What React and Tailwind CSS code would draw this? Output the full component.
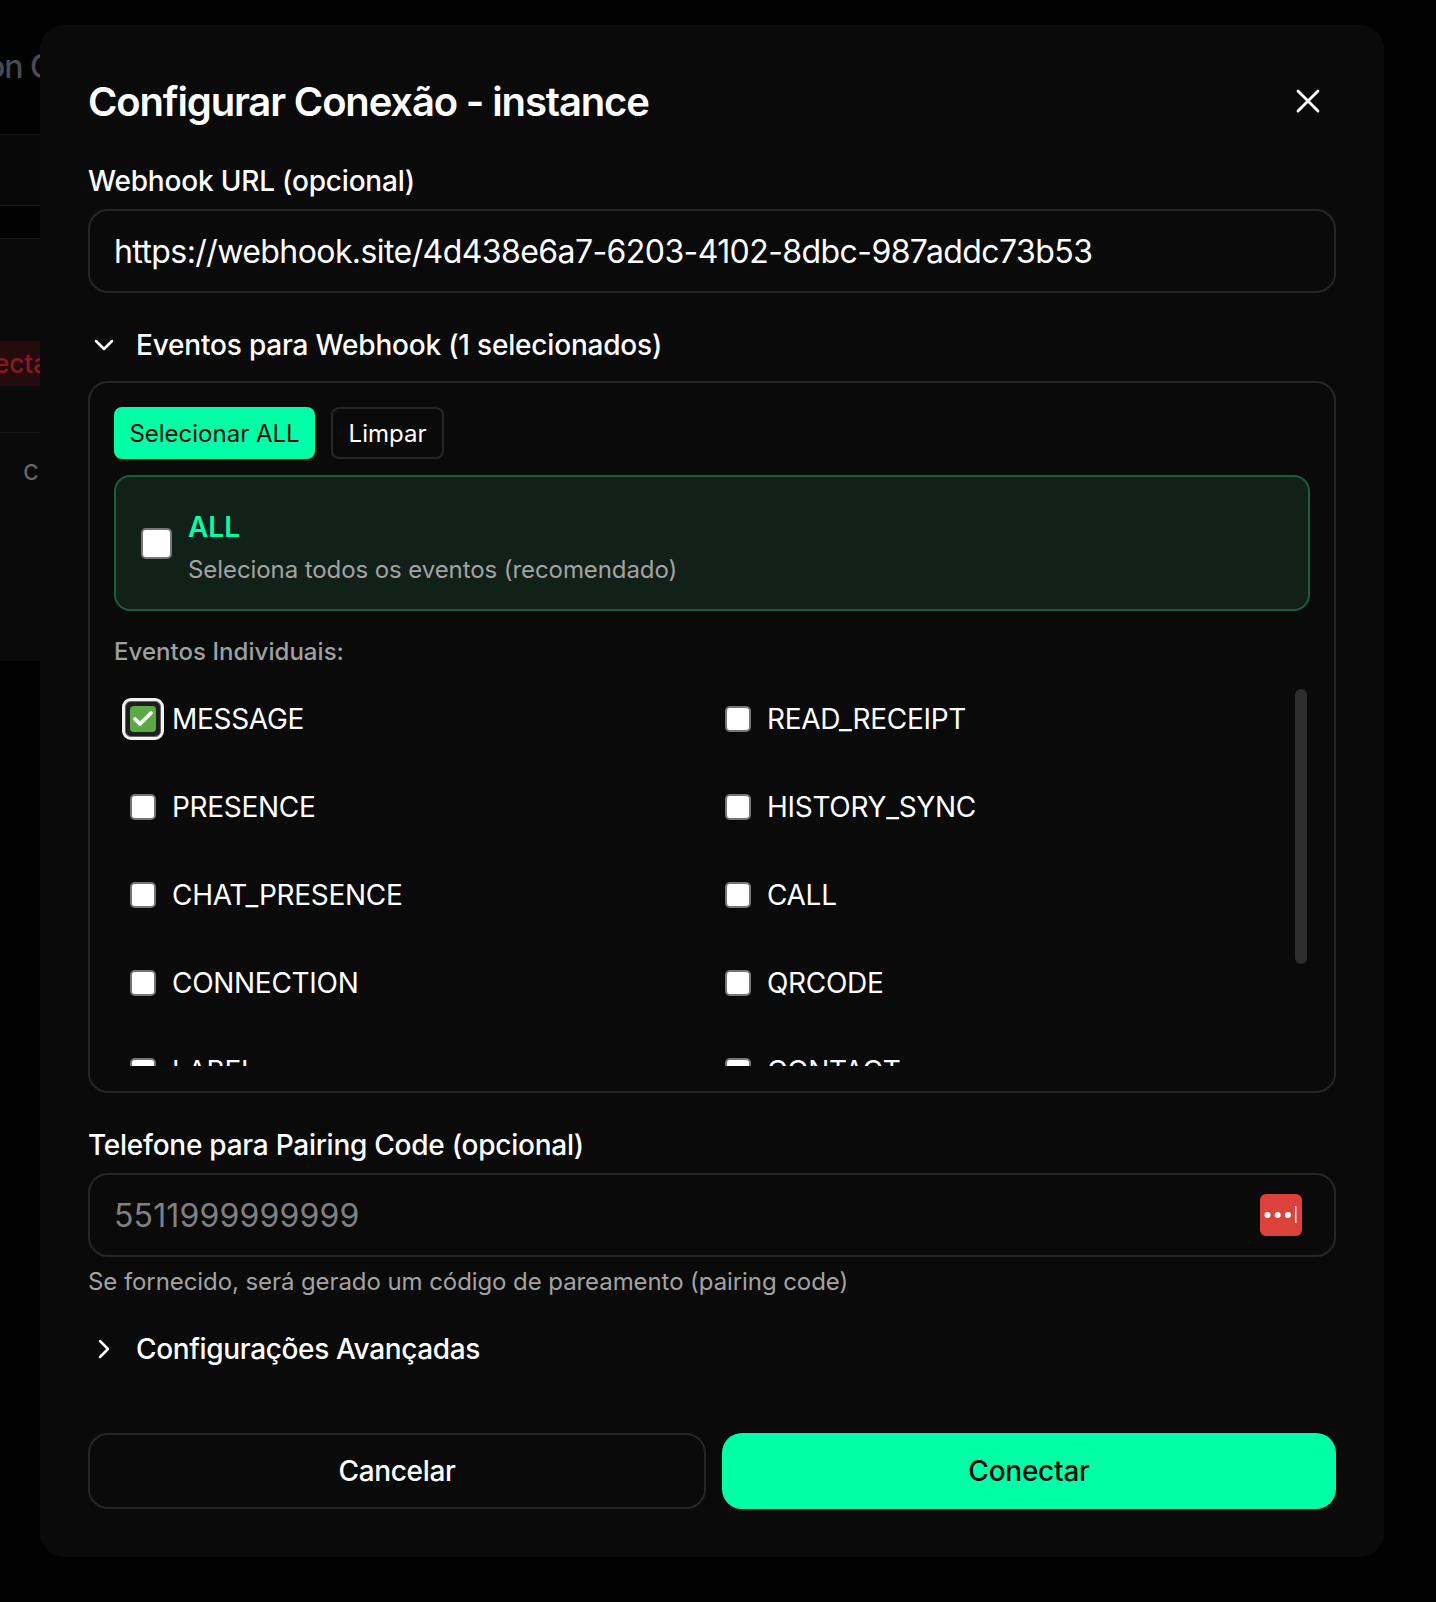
import React from "react";
import { X, ChevronDown, ChevronRight, Check } from "lucide-react";

const events = [
  ["MESSAGE", "READ_RECEIPT"],
  ["PRESENCE", "HISTORY_SYNC"],
  ["CHAT_PRESENCE", "CALL"],
  ["CONNECTION", "QRCODE"],
  ["LABEL", "CONTACT"],
];

function Box({ checked }) {
  if (checked) {
    return (
      <span className="relative flex h-[26px] w-[26px] shrink-0 items-center justify-center">
        <span className="absolute -inset-2 rounded-[9px] border-[3px] border-[#f2f2f2] bg-[#1e1e1e] shadow-[inset_0_0_0_1px_#666666]" />
        <span className="relative flex h-[26px] w-[26px] items-center justify-center rounded-[4px] bg-[#5aab47]">
          <Check className="h-6 w-6 text-white" strokeWidth={3.8} />
        </span>
      </span>
    );
  }
  return <span className="h-[26px] w-[26px] shrink-0 rounded-[5px] border-2 border-[#767676] bg-white" />;
}

function Row({ label, checked }) {
  return (
    <div className="flex h-[88px] items-center gap-4 px-4">
      <Box checked={checked} />
      <span className="text-[28px] leading-none tracking-[-0.3px] text-white">{label}</span>
    </div>
  );
}

export default function App() {
  return (
    <div className="relative h-[1602px] w-[1436px] overflow-hidden bg-[#020202] font-['Inter',sans-serif]">
      {/* dimmed page behind the dialog */}
      <div className="h-[661px] w-[100px]">
        <div className="h-[135px] border-b border-[#181818] pt-[45px]">
          <span className="ml-[-14px] block whitespace-nowrap text-[32px] font-medium leading-[44px] tracking-[-1px] text-[#484c52]">on G</span>
        </div>
        <div className="h-[70px] bg-[#080808]" />
        <div className="h-[34px] border-y border-[#181818] bg-[#020202]" />
        <div className="h-[194px] border-b border-[#181818] bg-[#0a0a0a] pt-[102px]">
          <div className="flex h-[45px] w-[60px] items-center overflow-hidden bg-[#240b0d] text-[26px] font-medium text-[#8a1a20]">
            <span className="ml-[-6px]">ecta</span>
          </div>
        </div>
        <div className="h-[228px] bg-[#0a0a0a] pl-[23px] pt-[17px] text-[28px] leading-[40px] text-[#666]">c’</div>
      </div>

      {/* dialog */}
      <div className="absolute left-[40px] top-[25px] flex h-[1532px] w-[1344px] flex-col rounded-[24px] bg-[#0a0a0a] px-[48px] pt-[48px]">
        <div className="flex h-[58px] items-center justify-between">
          <h1 className="text-[40px] font-semibold leading-none tracking-[-1.15px] text-white">Configurar Conexão - instance</h1>
          <X className="mb-[2px] mr-[8px] h-[40px] w-[40px] text-white" strokeWidth={1.7} />
        </div>

        <label className="mt-[30px] block text-[28px] font-medium leading-[40px] tracking-[-0.19px] text-white">Webhook URL (opcional)</label>
        <div className="mt-[8px] flex h-[84px] items-center rounded-[20px] border-2 border-[#262626] px-[24px] pt-[2px] text-[32px] tracking-[-0.58px] text-white">
          https://webhook.site/4d438e6a7-6203-4102-8dbc-987addc73b53
        </div>

        <div className="mt-[32px] flex h-[40px] items-center gap-[16px]">
          <ChevronDown className="h-[32px] w-[32px] text-white" strokeWidth={1.9} />
          <span className="text-[28px] font-medium leading-none tracking-[-0.19px] text-white">Eventos para Webhook (1 selecionados)</span>
        </div>

        <div className="mt-[16px] flex h-[712px] flex-col rounded-[20px] border-2 border-[#262626] px-[24px] pt-[24px]">
          <div className="flex gap-4">
            <button className="h-[52px] w-[201px] rounded-[8px] bg-[#00ffa6] pt-[2px] text-[24px] text-[#0a0a0a]">Selecionar ALL</button>
            <button className="h-[52px] w-[113px] rounded-[8px] border-2 border-[#262626] pt-[2px] text-[24px] text-white">Limpar</button>
          </div>
          <div className="mt-[16px] flex h-[136px] items-center gap-[16px] rounded-[16px] border-2 border-[#1d5c3f] bg-[#12201a] pl-[25px] pr-[24px]">
            <span className="h-[31px] w-[31px] shrink-0 rounded-[5px] border-2 border-[#767676] bg-white" />
            <div className="mt-[8px]">
              <div className="text-[28px] font-semibold leading-[40px] text-[#00ffa6]">ALL</div>
              <div className="mt-[5px] text-[24px] leading-[36px] tracking-[-0.08px] text-[#a3a3a3]">Seleciona todos os eventos (recomendado)</div>
            </div>
          </div>
          <div className="mt-[25px] text-[24px] font-medium leading-[32px] tracking-[0.05px] text-[#a0a0a0]">Eventos Individuais:</div>
          <div className="relative mt-[7px] h-[391px] overflow-hidden">
            <div className="grid grid-cols-2 gap-x-[16px] pr-[22px]">
              {events.flat().map((e) => (
                <Row key={e} label={e} checked={e === "MESSAGE"} />
              ))}
            </div>
            <div className="absolute right-[3px] top-[14px] h-[275px] w-[12px] rounded-full bg-[#2e2e2e]" />
          </div>
        </div>

        <label className="mt-[32px] block text-[28px] font-medium leading-[40px] tracking-[-0.25px] text-white">Telefone para Pairing Code (opcional)</label>
        <div className="mt-[8px] flex h-[84px] items-center justify-between rounded-[20px] border-2 border-[#262626] pl-[24px] pr-[32px] text-[32px] tracking-[0.15px] text-[#808080]">
          <span className="pt-[2px]">5511999999999</span>
          <span className="relative flex h-[42px] w-[42px] items-center justify-center rounded-[6px] bg-[#db423c]">
            <svg viewBox="0 0 42 42" className="h-[42px] w-[42px]">
              <circle cx="7.5" cy="21" r="3" fill="#fff" />
              <circle cx="17.7" cy="21" r="3" fill="#fff" />
              <circle cx="27.9" cy="21" r="3" fill="#fff" />
              <rect x="35" y="12" width="1.4" height="17" fill="#fff" />
            </svg>
          </span>
        </div>
        <p className="mt-[7px] text-[24px] leading-[36px] tracking-[-0.08px] text-[#a3a3a3]">Se fornecido, será gerado um código de pareamento (pairing code)</p>

        <div className="mt-[29px] flex h-[40px] items-center gap-[16px]">
          <ChevronRight className="h-[32px] w-[32px] text-white" strokeWidth={1.9} />
          <span className="text-[28px] font-medium leading-none tracking-[-0.35px] text-white">Configurações Avançadas</span>
        </div>

        <div className="mt-[64px] flex gap-4">
          <button className="h-[76px] flex-1 rounded-[20px] border-2 border-[#262626] text-[28px] font-medium tracking-[-0.35px] text-white">Cancelar</button>
          <button className="h-[76px] flex-1 rounded-[20px] bg-[#00ffa6] text-[28px] font-medium tracking-[-0.25px] text-[#0a0a0a]">Conectar</button>
        </div>
      </div>
    </div>
  );
}
